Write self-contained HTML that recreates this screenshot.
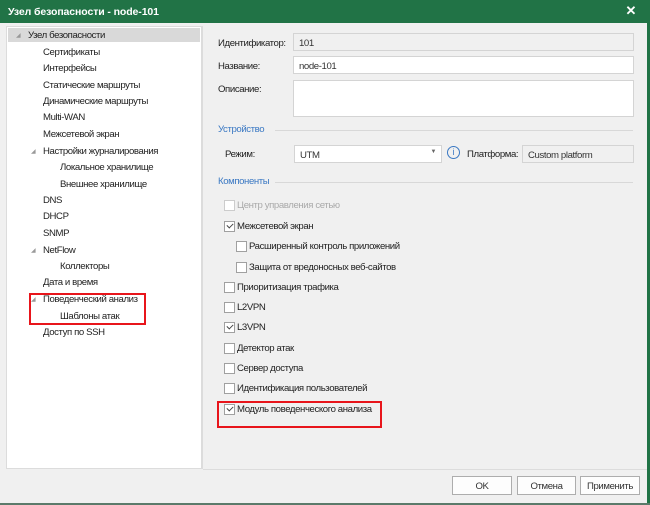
<!DOCTYPE html>
<html><head><meta charset="utf-8"><style>
*{margin:0;padding:0;box-sizing:border-box}
body{width:650px;height:505px;background:#f0f0f0;font-family:"Liberation Sans",sans-serif;font-size:9.6px;letter-spacing:-0.4px;color:#222;position:relative;overflow:hidden}
.a{position:absolute;white-space:nowrap}
.title{left:0;top:0;width:650px;height:23px;background:#217346;color:#fff;font-size:10.5px;letter-spacing:-0.1px;padding:6px 0 0 8px;font-weight:bold}
.tree{left:6px;top:26px;width:196px;height:443px;background:#fff;border:1px solid #dcdcdc}
.inp{position:absolute;border:1px solid #d4d4d4;background:#fff;padding:4px 0 0 5px;color:#333}
.g{background:#f0f0f0}
.cb{position:absolute;width:11px;height:11px;border:1px solid #a0a0a0;background:#fff}
.cb.c::after{content:"";position:absolute;left:2px;top:1px;width:5px;height:3px;border-left:1px solid #444;border-bottom:1px solid #444;transform:rotate(-45deg)}
.t{margin-top:1px}
.sec{color:#3a78c3}
.line{position:absolute;height:1px;background:#d8d8d8}
.btn{position:absolute;top:476px;height:19px;border:1px solid #adadad;background:#fdfdfd;text-align:center;padding-top:4px;color:#333}
.tri{font-size:6px;color:#999}
</style></head><body>
<div class="a title">Узел безопасности - node-101</div>
<div class="a" style="right:14px;top:3px;color:#fff;font-size:13px;font-weight:bold">✕</div>
<div class="a" style="left:647px;top:23px;width:3px;height:482px;background:#217346"></div>
<div class="a" style="left:0;top:503px;width:650px;height:2px;background:#5b7a6a"></div>
<div class="a tree"></div>
<div class="a" style="left:8px;top:28px;width:192px;height:14px;background:#d9d9d9"></div>
<div class="a tri" style="left:16px;top:32px">◢</div>
<div class="a" style="left:28px;top:30px">Узел безопасности</div>
<div class="a" style="left:43px;top:47px">Сертификаты</div>
<div class="a" style="left:43px;top:63px">Интерфейсы</div>
<div class="a" style="left:43px;top:80px">Статические маршруты</div>
<div class="a" style="left:43px;top:96px">Динамические маршруты</div>
<div class="a" style="left:43px;top:112px">Multi-WAN</div>
<div class="a" style="left:43px;top:129px">Межсетевой экран</div>
<div class="a tri" style="left:31px;top:148px">◢</div>
<div class="a" style="left:43px;top:146px">Настройки журналирования</div>
<div class="a" style="left:60px;top:162px">Локальное хранилище</div>
<div class="a" style="left:60px;top:179px">Внешнее хранилище</div>
<div class="a" style="left:43px;top:195px">DNS</div>
<div class="a" style="left:43px;top:211px">DHCP</div>
<div class="a" style="left:43px;top:228px">SNMP</div>
<div class="a tri" style="left:31px;top:247px">◢</div>
<div class="a" style="left:43px;top:245px">NetFlow</div>
<div class="a" style="left:60px;top:261px">Коллекторы</div>
<div class="a" style="left:43px;top:277px">Дата и время</div>
<div class="a tri" style="left:31px;top:296px">◢</div>
<div class="a" style="left:43px;top:294px">Поведенческий анализ</div>
<div class="a" style="left:60px;top:311px">Шаблоны атак</div>
<div class="a" style="left:43px;top:327px">Доступ по SSH</div>
<div class="a" style="left:29px;top:293px;width:117px;height:32px;border:2px solid #e8151b"></div>

<div class="a" style="left:202px;top:26px;width:1px;height:443px;background:#dcdcdc"></div>
<div class="a" style="left:218px;top:38px">Идентификатор:</div>
<div class="inp g" style="left:293px;top:33px;width:341px;height:18px">101</div>
<div class="a" style="left:218px;top:61px">Название:</div>
<div class="inp" style="left:293px;top:56px;width:341px;height:18px">node-101</div>
<div class="a" style="left:218px;top:84px">Описание:</div>
<div class="inp" style="left:293px;top:80px;width:341px;height:37px"></div>
<div class="a sec" style="left:218px;top:124px">Устройство</div>
<div class="line" style="left:275px;top:130px;width:358px"></div>
<div class="a" style="left:225px;top:149px">Режим:</div>
<div class="inp" style="left:294px;top:145px;width:148px;height:18px">UTM<span style="position:absolute;right:5px;top:3px;font-size:6px;color:#666">▼</span></div>
<div class="a" style="left:447px;top:146px;width:13px;height:13px;border:1.3px solid #3a78c3;border-radius:50%;color:#3a78c3;font-size:9px;text-align:center;line-height:11px;letter-spacing:0">i</div>
<div class="a" style="left:467px;top:149px">Платформа:</div>
<div class="inp g" style="left:522px;top:145px;width:112px;height:18px">Custom platform</div>
<div class="a sec" style="left:218px;top:176px">Компоненты</div>
<div class="line" style="left:275px;top:182px;width:358px"></div>

<div class="cb" style="left:224px;top:200px;border-color:#ccc"></div><div class="a t" style="left:237px;top:199px;color:#aaa">Центр управления сетью</div>
<div class="cb c" style="left:224px;top:221px"></div><div class="a t" style="left:237px;top:220px">Межсетевой экран</div>
<div class="cb" style="left:236px;top:241px"></div><div class="a t" style="left:249px;top:240px">Расширенный контроль приложений</div>
<div class="cb" style="left:236px;top:262px"></div><div class="a t" style="left:249px;top:261px">Защита от вредоносных веб-сайтов</div>
<div class="cb" style="left:224px;top:282px"></div><div class="a t" style="left:237px;top:281px">Приоритизация трафика</div>
<div class="cb" style="left:224px;top:302px"></div><div class="a t" style="left:237px;top:301px">L2VPN</div>
<div class="cb c" style="left:224px;top:322px"></div><div class="a t" style="left:237px;top:321px">L3VPN</div>
<div class="cb" style="left:224px;top:343px"></div><div class="a t" style="left:237px;top:342px">Детектор атак</div>
<div class="cb" style="left:224px;top:363px"></div><div class="a t" style="left:237px;top:362px">Сервер доступа</div>
<div class="cb" style="left:224px;top:383px"></div><div class="a t" style="left:237px;top:382px">Идентификация пользователей</div>
<div class="cb c" style="left:224px;top:404px"></div><div class="a t" style="left:237px;top:403px">Модуль поведенческого анализа</div>
<div class="a" style="left:217px;top:401px;width:165px;height:27px;border:2px solid #e8151b"></div>

<div class="line" style="left:203px;top:469px;width:444px;background:#dcdcdc"></div>
<div class="btn" style="left:452px;width:60px">OK</div>
<div class="btn" style="left:517px;width:59px">Отмена</div>
<div class="btn" style="left:580px;width:60px">Применить</div>
</body></html>
